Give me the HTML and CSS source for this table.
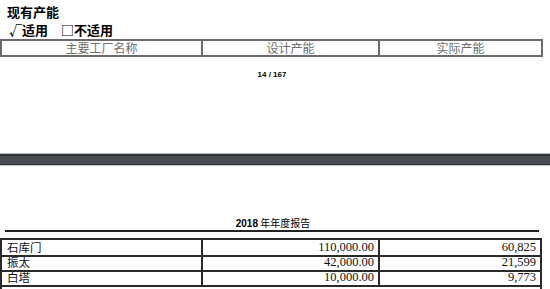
FILE: index.html
```html
<!DOCTYPE html>
<html lang="zh">
<head>
<meta charset="utf-8">
<link rel="stylesheet" href="styles.css">
</head>
<body>
<div class="page page-top">
  <div class="title">现有产能</div>
  <div class="opts"><span class="opt">√适用</span><span class="opt opt-no">□不适用</span></div>
  <div class="grid cap">
    <div class="cell">主要工厂名称</div>
    <div class="cell">设计产能</div>
    <div class="cell">实际产能</div>
  </div>
  <div class="pagenum">14 / 167</div>
</div>
<div class="sep"><div class="sep-inner"></div></div>
<div class="page page-bottom">
  <div class="rhead"><b class="yr">2018</b> 年年度报告</div>
  <div class="grid data">
    <div class="cell name">石库门</div>
    <div class="cell num">110,000.00</div>
    <div class="cell num">60,825</div>
    <div class="cell name">振太</div>
    <div class="cell num">42,000.00</div>
    <div class="cell num">21,599</div>
    <div class="cell name">白塔</div>
    <div class="cell num">10,000.00</div>
    <div class="cell num">9,773</div>
  </div>
</div>
</body>
</html>
```
FILE: styles.css
```css
html, body {
  margin: 0;
  padding: 0;
  background: #fff;
}
body {
  width: 550px;
  height: 289px;
  overflow: hidden;
  font-family: "Noto Sans CJK SC", "Liberation Sans", sans-serif;
  color: #000;
}
.page-top {
  padding-top: 2px;
}
.title {
  font-size: 13px;
  font-weight: bold;
  line-height: 19px;
  padding-left: 7px;
}
.opts {
  font-size: 13px;
  font-weight: bold;
  line-height: 18px;
  padding-left: 9px;
  display: flex;
  gap: 13px;
}
.grid {
  display: grid;
  box-sizing: border-box;
}
.cap {
  width: 543px;
  grid-template-columns: 199px 177px 1fr;
  border: 2px solid #6a6a6a;
}
.cap .cell {
  height: 14px;
  line-height: 14px;
  font-size: 12px;
  color: #6e6e6e;
  text-align: center;
}
.cap .cell + .cell {
  border-left: 2px solid #6a6a6a;
}
.pagenum {
  margin-top: 13px;
  text-align: center;
  font-family: "Liberation Sans", sans-serif;
  font-size: 8px;
  font-weight: bold;
  line-height: 10px;
  padding-right: 6px;
}
.sep {
  margin-top: 73px;
  height: 13px;
  box-sizing: border-box;
  border-top: 1px solid #b9bbbd;
  border-bottom: 1px solid #c8cacc;
  background: #2f3235;
  padding: 2px 0 1px;
}
.sep-inner {
  height: 100%;
  background: #4a4d51;
}
.rhead {
  margin: 51px 11px 0 5px;
  font-size: 10px;
  line-height: 12px;
  text-align: center;
  border-bottom: 2px solid #222;
  padding-left: 2px;
}
.yr {
  font-family: "Liberation Sans", sans-serif;
}
.data {
  margin-top: 6px;
  width: 542px;
  grid-template-columns: 199px 177px 1fr;
  grid-auto-rows: 15px;
  border: 2px solid #2a2a2a;
  border-bottom: none;
  height: 53px;
}
.data .cell {
  line-height: 15px;
  font-size: 11.5px;
  color: #111;
  border-bottom: 2px solid #2a2a2a;
  height: 15px;
}
.data .cell:nth-child(3n+2),
.data .cell:nth-child(3n) {
  border-left: 2px solid #2a2a2a;
}
.data .name {
  padding-left: 5px;
}
.data .num {
  text-align: right;
  padding-right: 4px;
  font-family: "Liberation Serif", serif;
  font-size: 12.5px;
}
```
